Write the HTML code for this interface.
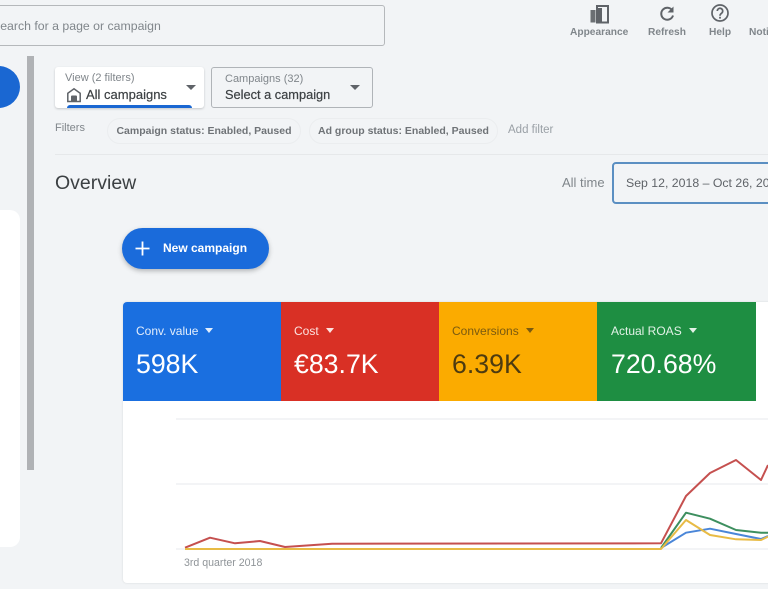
<!DOCTYPE html>
<html>
<head>
<meta charset="utf-8">
<style>
html,body{margin:0;padding:0;width:768px;height:589px;overflow:hidden;background:#f2f4f6;}
#r{position:absolute;left:0;top:0;width:768px;height:589px;overflow:hidden;background:#f2f4f6;font-family:"Liberation Sans",sans-serif;color:#5f6368;filter:blur(.35px);}
.a{position:absolute;white-space:nowrap;}
.lbl{font-size:10.2px;font-weight:bold;color:#80868b;line-height:13px;}
.tile{position:absolute;top:302px;height:99px;}
.tl{position:absolute;left:14px;top:22px;font-size:12px;line-height:14px;white-space:nowrap;}
.tv{position:absolute;left:14px;top:46px;font-size:26.7px;line-height:32px;white-space:nowrap;}
.car{display:inline-block;width:0;height:0;border-left:4.5px solid transparent;border-right:4.5px solid transparent;border-top:5px solid currentColor;margin-left:7px;vertical-align:2px;}
.chip{position:absolute;top:118px;height:26px;border:1px solid #ebedef;border-radius:13px;box-sizing:border-box;font-size:10.5px;font-weight:bold;color:#6f7377;line-height:25px;text-align:center;white-space:nowrap;}
</style>
</head>
<body>
<div id="r">
<!-- search -->
<div class="a" style="left:-10px;top:5px;width:395px;height:41px;border:1px solid #b5b8bb;border-radius:3px;box-sizing:border-box;"></div>
<div class="a" style="left:-8px;top:18px;font-size:12.3px;line-height:16px;color:#80868b;">Search for a page or campaign</div>

<!-- top icons -->
<svg class="a" style="left:589px;top:4px;" width="22" height="20" viewBox="0 0 22 20">
<rect x="1.5" y="6" width="5" height="12.5" fill="#6b6f73"/>
<rect x="8" y="2" width="11" height="16.5" fill="none" stroke="#5f6368" stroke-width="2"/>
<rect x="7.5" y="4" width="5.5" height="14.5" fill="#5f6368"/>
</svg>
<svg class="a" style="left:658px;top:5px;" width="18" height="18" viewBox="0 0 18 18">
<path d="M14.3 5.5A6 6 0 1 0 15 10.5" fill="none" stroke="#5f6368" stroke-width="2"/>
<path d="M15.5 1.5V7.5H9.5Z" fill="#5f6368"/>
</svg>
<svg class="a" style="left:710px;top:3px;" width="20" height="20" viewBox="0 0 20 20">
<circle cx="10" cy="10" r="8" fill="none" stroke="#5f6368" stroke-width="1.7"/>
<path d="M7.3 8a2.7 2.7 0 1 1 4.4 2.1c-1 .8-1.7 1.2-1.7 2.6" fill="none" stroke="#5f6368" stroke-width="1.7"/>
<rect x="9.1" y="13.8" width="1.8" height="1.8" fill="#5f6368"/>
</svg>
<div class="a lbl" style="left:570px;top:26px;">Appearance</div>
<div class="a lbl" style="left:648px;top:26px;">Refresh</div>
<div class="a lbl" style="left:709px;top:26px;">Help</div>
<div class="a lbl" style="left:749px;top:26px;">Notifications</div>

<!-- left side -->
<div class="a" style="left:-23px;top:66px;width:43px;height:42px;border-radius:50%;background:#1a67d2;"></div>
<div class="a" style="left:27px;top:56px;width:7px;height:414px;background:#b0b2b5;"></div>
<div class="a" style="left:-20px;top:210px;width:40px;height:337px;background:#fff;border-radius:10px;"></div>

<!-- view dropdown -->
<div class="a" style="left:55px;top:67px;width:149px;height:41px;background:#fff;border-radius:3px;box-shadow:0 1px 2px rgba(60,64,67,.25);overflow:hidden;">
  <div class="a" style="left:12px;bottom:0;width:125px;height:3px;background:#1a67d2;border-radius:3px 3px 0 0;"></div>
</div>
<div class="a" style="left:65px;top:72px;font-size:11px;line-height:13px;color:#80868b;">View (2 filters)</div>
<svg class="a" style="left:66px;top:87px;" width="16" height="16" viewBox="0 0 16 16">
<path d="M1.8 14.5V6.3L8 1.8l6.2 4.5v8.2z" fill="none" stroke="#5f6368" stroke-width="1.5"/>
<path d="M5 14.5V9.5a1 1 0 0 1 1-1h4a1 1 0 0 1 1 1v5z" fill="#5f6368"/>
</svg>
<div class="a" style="left:86px;top:87px;font-size:13px;line-height:15px;color:#3c4043;-webkit-text-stroke:.2px #3c4043;">All campaigns</div>
<div class="a" style="left:186px;top:85px;width:0;height:0;border-left:5px solid transparent;border-right:5px solid transparent;border-top:5px solid #5f6368;"></div>

<!-- campaigns dropdown -->
<div class="a" style="left:211px;top:67px;width:162px;height:41px;border:1px solid #b0b4b8;border-radius:3px;box-sizing:border-box;"></div>
<div class="a" style="left:225px;top:73px;font-size:11px;line-height:13px;color:#80868b;">Campaigns (32)</div>
<div class="a" style="left:225px;top:87px;font-size:12.8px;line-height:15px;color:#3c4043;-webkit-text-stroke:.2px #3c4043;">Select a campaign</div>
<div class="a" style="left:350px;top:85px;width:0;height:0;border-left:5px solid transparent;border-right:5px solid transparent;border-top:5px solid #5f6368;"></div>

<!-- filters -->
<div class="a" style="left:55px;top:122px;font-size:11px;line-height:13px;color:#80868b;">Filters</div>
<div class="chip" style="left:107px;width:194px;">Campaign status: Enabled, Paused</div>
<div class="chip" style="left:309px;width:189px;">Ad group status: Enabled, Paused</div>
<div class="a" style="left:508px;top:124px;font-size:11.5px;line-height:13px;color:#9aa0a6;">Add filter</div>
<div class="a" style="left:55px;top:154px;width:713px;height:1px;background:#e6e8ea;"></div>

<!-- overview -->
<div class="a" style="left:55px;top:172px;font-size:19.5px;line-height:22px;color:#3c4043;">Overview</div>
<div class="a" style="left:562px;top:175px;font-size:13px;line-height:15px;color:#80868b;">All time</div>
<div class="a" style="left:612px;top:162px;width:180px;height:42px;border:2px solid #5b8fc2;border-radius:4px;box-sizing:border-box;"></div>
<div class="a" style="left:626px;top:176px;font-size:12.3px;line-height:15px;color:#5f6368;">Sep 12, 2018 – Oct 26, 2018</div>

<!-- new campaign -->
<div class="a" style="left:122px;top:228px;width:147px;height:41px;border-radius:21px;background:#1a6bdb;box-shadow:0 2px 5px rgba(60,64,67,.35);"></div>
<svg class="a" style="left:135px;top:241px;" width="15" height="15" viewBox="0 0 15 15"><path d="M7.5 0.5V14.5M0.5 7.5H14.5" stroke="#fff" stroke-width="1.8"/></svg>
<div class="a" style="left:163px;top:241px;font-size:12px;font-weight:bold;line-height:15px;color:#fff;">New campaign</div>

<!-- card -->
<div class="a" style="left:123px;top:302px;width:680px;height:281px;background:#fff;border-radius:4px;box-shadow:0 0 2px rgba(60,64,67,.15);"></div>
<div class="tile" style="left:123px;width:158px;background:#1a6fe0;color:#fff;border-radius:4px 0 0 0;">
  <div class="tl" style="left:13px;color:#e3edfb;">Conv. value<span class="car"></span></div><div class="tv" style="left:13px;">598K</div>
</div>
<div class="tile" style="left:281px;width:158px;background:#d93025;color:#fff;">
  <div class="tl" style="left:13px;color:#fbe3e1;">Cost<span class="car"></span></div><div class="tv" style="left:13px;">€83.7K</div>
</div>
<div class="tile" style="left:439px;width:158px;background:#fbab00;color:#4d3b10;">
  <div class="tl" style="left:13px;color:#7a5a10;">Conversions<span class="car"></span></div><div class="tv" style="left:13px;">6.39K</div>
</div>
<div class="tile" style="left:597px;width:159px;background:#1e8e42;color:#fff;">
  <div class="tl" style="left:14px;color:#e2f2e7;">Actual ROAS<span class="car"></span></div><div class="tv" style="left:14px;">720.68%</div>
</div>

<!-- chart -->
<svg class="a" style="left:0;top:0;" width="768" height="589" viewBox="0 0 768 589">
<path d="M176 419H768M176 484H768M176 549H768" stroke="#eceef0" stroke-width="1.2" fill="none"/>
<g fill="none" stroke-width="2" stroke-linejoin="round">
<path d="M661 548L686 532.7L710 528.7L736 534L761 539L768 536" stroke="#4a86d8"/>
<path d="M661 548L686 512.7L710 518.7L736 530L761 532.7L768 532.7" stroke="#3d8f5f"/>
<path d="M185 547.7L210 537.7L235 543.3L260 541L285 547L332 543.7L661 543.3L686 496L710 473L736 460L761 480L768 465" stroke="#c5504f"/>
<path d="M185 549H661L686 520L710 535L736 539.3L761 540L768 536.7" stroke="#e8bb45"/>
</g>
</svg>
<div class="a" style="left:184px;top:557px;font-size:10.6px;line-height:13px;color:#8f9498;">3rd quarter 2018</div>
</div>
</body>
</html>
